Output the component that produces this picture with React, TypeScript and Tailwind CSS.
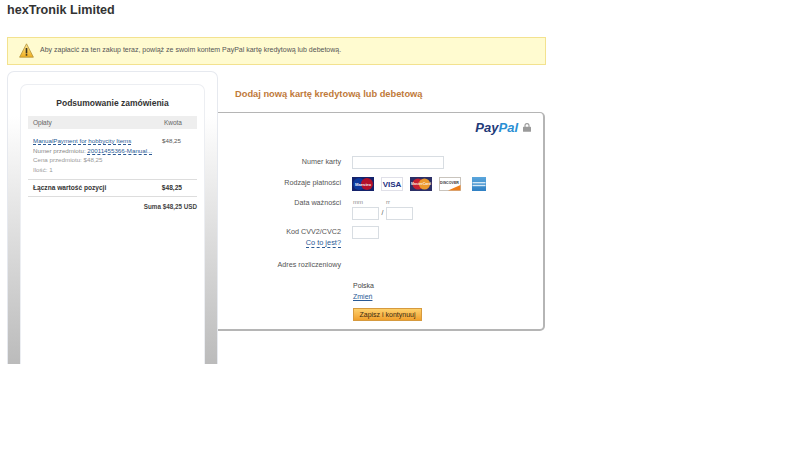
import React from "react";

const svgFont = "Liberation Sans, sans-serif";

function Maestro() {
  return (
    <svg width="22" height="14" viewBox="0 0 22 14" className="block">
      <rect width="22" height="14" fill="#14226b" />
      <circle cx="7" cy="7" r="6" fill="#0d3a9e" />
      <circle cx="15" cy="7" r="6" fill="#b3102a" />
      <text x="11" y="8.5" textAnchor="middle" fontSize="4.2" fontWeight="700" fill="#eef0fa" fontFamily={svgFont}>Maestro</text>
    </svg>
  );
}
function Visa() {
  return (
    <svg width="22" height="14" viewBox="0 0 22 14" className="block">
      <rect x="0.5" y="0.5" width="21" height="13" fill="#fff" stroke="#e0e0e8" />
      <text x="11" y="10.3" textAnchor="middle" fontSize="8" fontWeight="700" fill="#1d2f7e" fontFamily={svgFont}>VISA</text>
    </svg>
  );
}
function Master() {
  return (
    <svg width="22" height="14" viewBox="0 0 22 14" className="block">
      <rect width="22" height="14" fill="#2c2f66" />
      <circle cx="8" cy="7" r="5.6" fill="#c8202f" />
      <circle cx="14.5" cy="7" r="5.6" fill="#ee9a2c" />
      <text x="11" y="8.4" textAnchor="middle" fontSize="3.6" fontWeight="700" fill="#fbeee0" fontFamily={svgFont}>MasterCard</text>
    </svg>
  );
}
function Discover() {
  return (
    <svg width="22" height="14" viewBox="0 0 22 14" className="block">
      <rect x="0.5" y="0.5" width="21" height="13" fill="#fff" stroke="#c9c4bd" />
      <path d="M9 13.5 L21.5 8 V13.5 Z" fill="#ee7f1c" />
      <text x="10.5" y="6.6" textAnchor="middle" fontSize="3.6" fontWeight="700" fill="#333" fontFamily={svgFont}>DISCOVER</text>
    </svg>
  );
}
function Amex() {
  return (
    <svg width="14" height="14" viewBox="0 0 14 14" className="block">
      <defs>
        <linearGradient id="ax" x1="0" y1="0" x2="0" y2="1">
          <stop offset="0" stopColor="#5aa6dc" />
          <stop offset="1" stopColor="#2f80c4" />
        </linearGradient>
      </defs>
      <rect width="14" height="14" fill="url(#ax)" />
      <rect x="0.5" y="5" width="13" height="1.4" fill="#d5e8f6" />
      <rect x="0.5" y="7.8" width="13" height="1.4" fill="#d5e8f6" />
    </svg>
  );
}

function Warning() {
  return (
    <svg width="15" height="15" viewBox="0 0 15 15" className="block">
      <defs>
        <linearGradient id="w" x1="0" y1="0" x2="0" y2="1">
          <stop offset="0" stopColor="#fdeb9a" />
          <stop offset="1" stopColor="#f0ae1e" />
        </linearGradient>
      </defs>
      <path d="M7.5 0.8 L14.4 14.2 H0.6 Z" fill="url(#w)" stroke="#b39238" strokeWidth="0.8" strokeLinejoin="round" />
      <rect x="6.7" y="5" width="1.6" height="5.4" fill="#3a3320" />
      <rect x="6.7" y="11.1" width="1.6" height="1.6" fill="#3a3320" />
    </svg>
  );
}

function Field({ label, children, className = "", labelClass = "" }: { label: React.ReactNode; children?: React.ReactNode; className?: string; labelClass?: string }) {
  return (
    <div className={`flex ${className}`}>
      <div className={`w-[123px] shrink-0 text-right text-[#555] text-[7.2px] leading-[11px] ${labelClass}`}>{label}</div>
      <div className="ml-[11px]">{children}</div>
    </div>
  );
}

const inputCls = "border border-[#d8dde2] bg-white h-[13px] block";

export default function App() {
  return (
    <div className="w-[800px] h-[451px] bg-white overflow-hidden text-[7px] text-[#444] font-['Liberation_Sans',Arial,sans-serif]">
      <h1 className="pl-[7px] pt-[3px] h-[37px] text-[12.6px] leading-[15px] font-bold text-[#333]">hexTronik Limited</h1>

      <div className="ml-[7px] w-[539px] h-[28px] border border-[#f3e28f] bg-[#fffbd0] flex items-center pl-[11px] pb-[2px]">
        <Warning />
        <span className="ml-[6px] text-[#555] text-[7px]">Aby zapłacić za ten zakup teraz, powiąż ze swoim kontem PayPal kartę kredytową lub debetową.</span>
      </div>

      <div className="flex mt-[6px] ml-[7px] items-start">
        <div className="w-[211px] h-[293px] rounded-t-[7px] border-t border-x border-[#e6e9ef] bg-gradient-to-b from-white from-[15%] to-[#bbbbbb] pt-[12px] px-[12px]">
          <div className="h-[280px] rounded-t-[7px] bg-white border-t border-x border-[#eceef2] pt-[13px]">
            <div className="text-center text-[8.5px] leading-[11px] font-bold text-[#333]">Podsumowanie zamówienia</div>
            <div className="mx-[7px] mt-[7px] h-[13px] bg-[#eeeeee] flex justify-between items-center pl-[5px] pr-[15px] text-[#666] text-[6.5px]">
              <span>Opłaty</span>
              <span>Kwota</span>
            </div>
            <div className="mx-[7px] mt-[6px] pl-[5px] pr-[16px] h-[45px] flex justify-between border-b border-[#dddddd] leading-[9.5px] text-[6.2px] whitespace-nowrap">
              <div>
                <div className="text-[#2a5a95] mt-[1px]"><span className="border-b border-dashed border-[#2a5a95]">ManualPayment for hobbycity Items</span></div>
                <div className="text-[#888]">Numer przedmiotu: <span className="text-[#2a5a95] border-b border-dashed border-[#2a5a95]">20011455366-Manual...</span></div>
                <div className="text-[#999]">Cena przedmiotu: $48,25</div>
                <div className="text-[#999]">Ilość: 1</div>
              </div>
              <span className="text-[#555] mt-[1px]">$48,25</span>
            </div>
            <div className="mx-[7px] h-[17px] pl-[5px] pr-[15px] flex justify-between items-center border-b border-[#dddddd] font-bold text-[#333] text-[6.6px]">
              <span>Łączna wartość pozycji</span>
              <span>$48,25</span>
            </div>
            <div className="mx-[7px] mt-[5px] text-right font-bold text-[#444] text-[6.3px]">Suma $48,25 USD</div>
          </div>
        </div>

        <div className="flex-1">
          <div className="ml-[17px] mt-[17px] h-[24px] text-[9.3px] leading-[12px] font-bold text-[#c07a3a]">Dodaj nową kartę kredytową lub debetową</div>
          <div className="w-[327px] h-[219px] bg-white rounded-r-[5px] border-y border-r border-[#b5b5b5] border-r-2 border-b-2">
            <div className="flex justify-end items-center pr-[12px] pt-[5px] h-[24px] gap-[5px]">
              <span className="text-[13px] leading-none font-bold italic"><span className="text-[#1f3a78]">Pay</span><span className="text-[#2a8fd4]">Pal</span></span>
              <svg width="8" height="9" viewBox="0 0 8 9" className="block"><path d="M2 4V2.6a2 2 0 014 0V4" fill="none" stroke="#9a9a9a" strokeWidth="1.1" /><rect y="3.8" width="8" height="5" rx="0.6" fill="#9a9a9a" /></svg>
            </div>
            <div className="mt-[19px]">
              <Field label="Numer karty" className="items-center" labelClass="pb-[2px]">
                <div className={`${inputCls} w-[92px]`} />
              </Field>
              <Field label="Rodzaje płatności" className="mt-[8px] items-center" labelClass="pb-[3px]">
                <div className="flex gap-[7px]">
                  <Maestro /><Visa /><Master /><Discover /><div className="ml-[4px]"><Amex /></div>
                </div>
              </Field>
              <Field label="Data ważności" className="mt-[6px]">
                <div className="flex text-[#888] text-[6px] leading-[8px] pt-[1px]"><span className="w-[34px] pl-[1px]">mm</span><span>rr</span></div>
                <div className="flex items-center mt-[1px] text-[#555]">
                  <div className={`${inputCls} w-[27px]`} />
                  <span className="w-[7px] text-center">/</span>
                  <div className={`${inputCls} w-[27px]`} />
                </div>
              </Field>
              <Field label={<><div>Kod CVV2/CVC2</div><div className="mt-[-0.5px] text-[7.4px]"><span className="text-[#2a5a95] border-b border-dashed border-[#2a5a95]">Co to jest?</span></div></>} className="mt-[6px]">
                <div className={`${inputCls} w-[27px]`} />
              </Field>
              <Field label="Adres rozliczeniowy" className="mt-[11px]" />
              <div className="ml-[135px] mt-[10px] leading-[11px] text-[#444]">
                <div>Polska</div>
                <div className="underline text-[#2a5a95]">Zmień</div>
                <div className="mt-[6px] w-[69px] h-[13px] bg-gradient-to-b from-[#fdd06a] to-[#f0a02a] border border-[#d69a3e] flex items-center justify-center text-[#3b2a10]">Zapisz i kontynuuj</div>
              </div>
            </div>
          </div>
        </div>
      </div>
    </div>
  );
}
